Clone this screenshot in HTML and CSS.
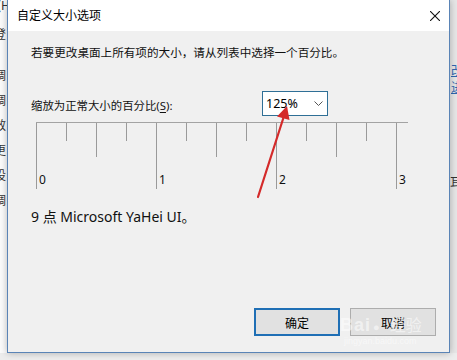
FILE: index.html
```html
<!DOCTYPE html>
<html lang="zh-CN">
<head>
<meta charset="utf-8">
<title>自定义大小选项</title>
<link rel="stylesheet" href="styles.css">
</head>
<body>
<div class="screen">
  <div class="row">
    <div class="side side-left">
      <div class="s-first">(H</div>
      <div class="s-second">登</div>
      <div class="s-list">
        <div class="s-line">调</div>
        <div class="s-line">调</div>
        <div class="s-line">效</div>
        <div class="s-line">更</div>
        <div class="s-line">设</div>
        <div class="s-line">调</div>
      </div>
    </div>
    <div class="dialog">
      <div class="titlebar">
        <span class="title">自定义大小选项</span>
        <svg class="close" width="10" height="10" viewBox="0 0 10 10"><path d="M0 0L10 10M10 0L0 10" stroke="#111" stroke-width="1.1" fill="none"/></svg>
      </div>
      <div class="content">
        <div class="desc">若要更改桌面上所有项的大小，请从列表中选择一个百分比。</div>
        <div class="scale-row">
          <div class="scale-label">缩放为正常大小的百分比(<u>S</u>):</div>
          <div class="combo">
            <span class="combo-value">125%</span>
            <svg class="chev" width="9" height="5" viewBox="0 0 9 5"><path d="M0.5 0.5L4.5 4.5L8.5 0.5" stroke="#555" stroke-width="1" fill="none"/></svg>
          </div>
        </div>
        <div class="ruler">
          <div class="tick major"><span class="num">0</span></div>
          <div class="tick minor"></div>
          <div class="tick mid"></div>
          <div class="tick minor"></div>
          <div class="tick major"><span class="num">1</span></div>
          <div class="tick minor"></div>
          <div class="tick mid"></div>
          <div class="tick minor"></div>
          <div class="tick major"><span class="num">2</span></div>
          <div class="tick minor"></div>
          <div class="tick mid"></div>
          <div class="tick minor"></div>
          <div class="tick major last"><span class="num">3</span></div>
        </div>
        <div class="sample">9 点 Microsoft YaHei UI。</div>
        <div class="buttons">
          <button class="btn primary">确定</button>
          <button class="btn">取消</button>
        </div>
      </div>
    </div>
    <div class="side side-right">
      <div class="r-link">改</div>
      <div class="r-link">进</div>
      <div class="r-text">耳</div>
    </div>
  </div>
  <div class="bottom"></div>
  <svg class="arrow" width="457" height="360" viewBox="0 0 457 360">
    <path d="M258 197L284 116" stroke="#d42a2a" stroke-width="2.2" fill="none" stroke-linecap="round"/>
    <polygon points="287,106 289.5,120 277,116.5" fill="#d42a2a"/>
  </svg>
  <div class="watermark"><span class="wm-big">Bai</span><span class="wm-paw">●</span><span class="wm-cn">经验</span><div class="wm-url">jingyan.baidu.com</div></div>
</div>
</body>
</html>
```

FILE: styles.css
```css
html, body {
  margin: 0;
  padding: 0;
}
body {
  font-family: "Noto Sans", "Noto Sans CJK SC", sans-serif;
  color: #000;
}
.screen {
  position: relative;
  width: 457px;
  height: 360px;
  overflow: hidden;
  background: #ebebeb;
}
.row {
  display: flex;
  height: 353px;
}
.side {
  width: 7px;
  flex: none;
  overflow: hidden;
  font-size: 12px;
  font-family: "Noto Sans CJK SC", sans-serif;
  color: #333;
}
.side-left {
  background: #fbfbfb;
}
.s-first {
  height: 12px;
  line-height: 12px;
  margin-top: -1px;
  margin-left: -3px;
  white-space: nowrap;
}
.s-second {
  height: 12px;
  line-height: 12px;
  margin-top: 17px;
  margin-left: -6px;
}
.s-list {
  padding-top: 22px;
}
.s-line {
  height: 25px;
  line-height: 25px;
  margin-left: -6px;
}
.side-right {
  background: #e6e6e6;
  padding-top: 61px;
}
.r-link {
  height: 17px;
  line-height: 17px;
  color: #2f66b0;
  text-decoration: underline;
  margin-left: 1px;
}
.r-text {
  margin-top: 78px;
  height: 17px;
  line-height: 17px;
  margin-left: 0;
}
.dialog {
  position: relative;
  z-index: 1;
  width: 443px;
  flex: none;
  box-sizing: border-box;
  border: 1px solid #5a84b6;
  border-top: none;
  background: #f0f0f0;
  display: flex;
  flex-direction: column;
  box-shadow: 0 0 7px rgba(0, 0, 0, 0.28);
}
.titlebar {
  height: 31px;
  flex: none;
  background: #fff;
  display: flex;
  align-items: center;
  justify-content: space-between;
  padding: 0 9px;
}
.title {
  font-size: 12px;
  line-height: 16px;
}
.close {
  display: block;
}
.content {
  flex: 1;
  display: flex;
  flex-direction: column;
  padding: 0 13px 0 23px;
  font-size: 12px;
}
.desc {
  margin-top: 14px;
  line-height: 16px;
  font-size: 11.6px;
  color: #111;
}
.scale-row {
  margin-top: 30px;
  display: flex;
  align-items: flex-start;
}
.scale-label {
  width: 231px;
  flex: none;
  line-height: 16px;
  font-size: 11.4px;
  padding-top: 7px;
  color: #111;
}
.scale-label u {
  text-underline-offset: 2px;
}
.combo {
  width: 66px;
  height: 25px;
  box-sizing: border-box;
  border: 1px solid #2f6f96;
  background: #fff;
  display: flex;
  align-items: center;
  justify-content: space-between;
  padding: 0 4px 0 3px;
}
.combo-value {
  font-size: 12.5px;
  line-height: 16px;
}
.chev {
  display: block;
}
.ruler {
  margin-top: 6px;
  margin-left: 5px;
  width: 372px;
  border-top: 1px solid #a3a3a3;
  display: flex;
  align-items: flex-start;
}
.tick {
  width: 30px;
  flex: none;
  box-sizing: border-box;
  border-left: 1px solid #9a9a9a;
}
.tick.minor {
  height: 18px;
}
.tick.mid {
  height: 34px;
}
.tick.major {
  height: 66px;
  display: flex;
  align-items: flex-end;
}
.tick.last {
  width: 12px;
}
.num {
  padding-left: 2px;
  margin-bottom: 2px;
  line-height: 14px;
  font-size: 12px;
  color: #111;
}
.sample {
  margin-top: 18px;
  font-size: 14px;
  line-height: 20px;
  color: #111;
}
.buttons {
  margin-top: auto;
  margin-bottom: 16px;
  display: flex;
  justify-content: flex-end;
  gap: 10px;
}
.btn {
  width: 86px;
  height: 28px;
  box-sizing: border-box;
  background: #e1e1e1;
  border: 1px solid #adadad;
  font-family: "Noto Sans CJK SC", sans-serif;
  font-size: 12px;
  color: #000;
  padding: 0;
  margin: 0;
}
.btn.primary {
  border: 2px solid #1f6fb5;
}
.bottom {
  height: 7px;
  background: #ededed;
}
.arrow {
  position: absolute;
  left: 0;
  top: 0;
  z-index: 2;
  pointer-events: none;
}
.watermark {
  position: absolute;
  left: 340px;
  top: 312px;
  z-index: 3;
  color: rgba(255, 255, 255, 0.55);
  font-family: "Liberation Sans", sans-serif;
  white-space: nowrap;
  pointer-events: none;
}
.wm-big {
  font-size: 18px;
  font-weight: bold;
  letter-spacing: 1px;
}
.wm-paw {
  font-size: 11px;
  margin: 0 2px;
}
.wm-cn {
  font-family: "Noto Sans CJK SC", sans-serif;
  font-size: 16px;
  margin-left: 8px;
}
.wm-url {
  font-size: 9px;
  line-height: 10px;
  margin-left: 4px;
  color: rgba(255, 255, 255, 0.5);
}
```
